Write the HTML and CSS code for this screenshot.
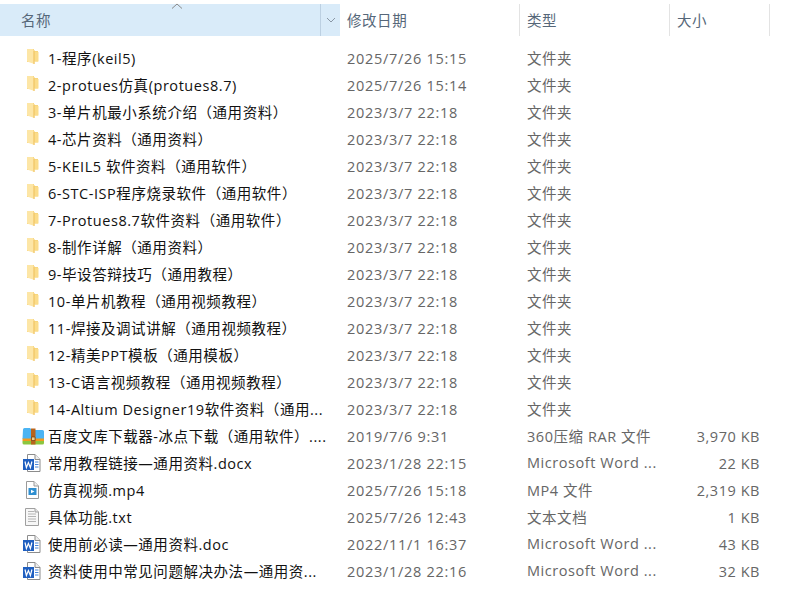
FILE: index.html
```html
<!DOCTYPE html>
<html lang="zh-CN">
<head>
<meta charset="utf-8">
<title>文件列表</title>
<link rel="stylesheet" href="styles.css">
</head>
<body>
<svg class="defs" width="0" height="0" aria-hidden="true">
  <symbol id="folder" viewBox="0 0 16 18">
    <path d="M3 1h7v13H3z" fill="#f3cb62"/>
    <path d="M9 3h5v10.500H9z" fill="#f7d67c"/>
    <path d="M3 1h6l1.500 1.500V16L3 13.500z" fill="#fde6a6"/>
    <path d="M10 2.500V16" stroke="#eebd55"/>
    <path d="M11 4h3.500v9.500H11z" fill="#fbdc8a"/>
  </symbol>
  <symbol id="rar" viewBox="0 0 22 18">
    <path d="M1 2.500Q1 1 2.500 1H8l2 2h10.500Q22 3 22 4.500V12H0.500z" fill="#4bb4f3"/>
    <path d="M0.500 11.500H22V14H0.500z" fill="#f39a1e"/>
    <path d="M0.500 14H22V16Q22 17.500 20.500 17.500H2Q0.500 17.500 0.500 16z" fill="#8cc63f"/>
    <path d="M9 1.500h4.500v16H9z" fill="#b8641c"/>
    <path d="M9.500 10h3.500v3.500H9.500z" fill="#f3d28a" stroke="#6e3b10" stroke-width="0.700"/>
  </symbol>
  <symbol id="word" viewBox="0 0 18 18">
    <path d="M4.500 0.500H12l5 5v12H4.500z" fill="#fff" stroke="#8c8c8c"/>
    <path d="M12 0.500V5.500H17" fill="#eee" stroke="#8c8c8c"/>
    <path d="M12 8h3.500M12 10.500h3.500M12 13h3.500" stroke="#4a86d8"/>
    <path d="M0 5h11v11H0z" fill="#1f5fc0"/>
    <path d="M2 7.500l1.400 6 2-5 2 5 1.500-6" fill="none" stroke="#fff" stroke-width="1.200"/>
  </symbol>
  <symbol id="video" viewBox="0 0 16 18">
    <path d="M2.500 0.500H10l4.500 4.500v12.500H2.500z" fill="#fff" stroke="#9a9a9a"/>
    <path d="M10 0.500V5h4.500" fill="#eee" stroke="#9a9a9a"/>
    <path d="M4.500 7h8v7h-8z" fill="#2f8fd0"/>
    <path d="M7 8.800l3.500 1.700L7 12.200z" fill="#fff"/>
  </symbol>
  <symbol id="text" viewBox="0 0 16 18">
    <path d="M1.500 0.500H11l3.500 3.500v13.500h-13z" fill="#f7f7f7" stroke="#a0a0a0"/>
    <path d="M11 0.500V4h3.500" fill="#e4e4e4" stroke="#a0a0a0"/>
    <path d="M4 3.500h6M4 6h8M4 8.500h8M4 11h8M4 13.500h8" stroke="#b4b4b4"/>
  </symbol>
</svg>
<main class="list">
  <header class="head">
    <div class="hcol hname"><span class="sort"><svg width="12" height="6" viewBox="0 0 12 6"><path d="M1 5.500L6 1l5 4.500" fill="none" stroke="#8a8a8a"/></svg></span><span class="hlabel">名称</span><span class="drop"><svg width="10" height="6" viewBox="0 0 10 6"><path d="M1 1l4 4 4-4" fill="none" stroke="#8a97a5"/></svg></span></div>
    <div class="hcol hdate"><span>修改日期</span></div>
    <div class="hcol htype"><span>类型</span></div>
    <div class="hcol hsize"><span>大小</span></div>
  </header>
  <div class="rows">
    <div class="row"><span class="name"><svg class="ic"><use href="#folder"/></svg><span class="nm">1-程序(keil5)</span></span><span class="date">2025/7/26 15:15</span><span class="type">文件夹</span><span class="size"></span></div>
    <div class="row"><span class="name"><svg class="ic"><use href="#folder"/></svg><span class="nm">2-protues仿真(protues8.7)</span></span><span class="date">2025/7/26 15:14</span><span class="type">文件夹</span><span class="size"></span></div>
    <div class="row"><span class="name"><svg class="ic"><use href="#folder"/></svg><span class="nm">3-单片机最小系统介绍（通用资料）</span></span><span class="date">2023/3/7 22:18</span><span class="type">文件夹</span><span class="size"></span></div>
    <div class="row"><span class="name"><svg class="ic"><use href="#folder"/></svg><span class="nm">4-芯片资料（通用资料）</span></span><span class="date">2023/3/7 22:18</span><span class="type">文件夹</span><span class="size"></span></div>
    <div class="row"><span class="name"><svg class="ic"><use href="#folder"/></svg><span class="nm">5-KEIL5 软件资料（通用软件）</span></span><span class="date">2023/3/7 22:18</span><span class="type">文件夹</span><span class="size"></span></div>
    <div class="row"><span class="name"><svg class="ic"><use href="#folder"/></svg><span class="nm">6-STC-ISP程序烧录软件（通用软件）</span></span><span class="date">2023/3/7 22:18</span><span class="type">文件夹</span><span class="size"></span></div>
    <div class="row"><span class="name"><svg class="ic"><use href="#folder"/></svg><span class="nm">7-Protues8.7软件资料（通用软件）</span></span><span class="date">2023/3/7 22:18</span><span class="type">文件夹</span><span class="size"></span></div>
    <div class="row"><span class="name"><svg class="ic"><use href="#folder"/></svg><span class="nm">8-制作详解（通用资料）</span></span><span class="date">2023/3/7 22:18</span><span class="type">文件夹</span><span class="size"></span></div>
    <div class="row"><span class="name"><svg class="ic"><use href="#folder"/></svg><span class="nm">9-毕设答辩技巧（通用教程）</span></span><span class="date">2023/3/7 22:18</span><span class="type">文件夹</span><span class="size"></span></div>
    <div class="row"><span class="name"><svg class="ic"><use href="#folder"/></svg><span class="nm">10-单片机教程（通用视频教程）</span></span><span class="date">2023/3/7 22:18</span><span class="type">文件夹</span><span class="size"></span></div>
    <div class="row"><span class="name"><svg class="ic"><use href="#folder"/></svg><span class="nm">11-焊接及调试讲解（通用视频教程）</span></span><span class="date">2023/3/7 22:18</span><span class="type">文件夹</span><span class="size"></span></div>
    <div class="row"><span class="name"><svg class="ic"><use href="#folder"/></svg><span class="nm">12-精美PPT模板（通用模板）</span></span><span class="date">2023/3/7 22:18</span><span class="type">文件夹</span><span class="size"></span></div>
    <div class="row"><span class="name"><svg class="ic"><use href="#folder"/></svg><span class="nm">13-C语言视频教程（通用视频教程）</span></span><span class="date">2023/3/7 22:18</span><span class="type">文件夹</span><span class="size"></span></div>
    <div class="row"><span class="name"><svg class="ic"><use href="#folder"/></svg><span class="nm">14-Altium Designer19软件资料（通用...</span></span><span class="date">2023/3/7 22:18</span><span class="type">文件夹</span><span class="size"></span></div>
    <div class="row"><span class="name"><svg class="ic wide"><use href="#rar"/></svg><span class="nm">百度文库下载器-冰点下载（通用软件）....</span></span><span class="date">2019/7/6 9:31</span><span class="type">360压缩 RAR 文件</span><span class="size">3,970 KB</span></div>
    <div class="row"><span class="name"><svg class="ic doc"><use href="#word"/></svg><span class="nm">常用教程链接—通用资料.docx</span></span><span class="date">2023/1/28 22:15</span><span class="type">Microsoft Word ...</span><span class="size">22 KB</span></div>
    <div class="row"><span class="name"><svg class="ic doc"><use href="#video"/></svg><span class="nm">仿真视频.mp4</span></span><span class="date">2025/7/26 15:18</span><span class="type">MP4 文件</span><span class="size">2,319 KB</span></div>
    <div class="row"><span class="name"><svg class="ic doc"><use href="#text"/></svg><span class="nm">具体功能.txt</span></span><span class="date">2025/7/26 12:43</span><span class="type">文本文档</span><span class="size">1 KB</span></div>
    <div class="row"><span class="name"><svg class="ic doc"><use href="#word"/></svg><span class="nm">使用前必读—通用资料.doc</span></span><span class="date">2022/11/1 16:37</span><span class="type">Microsoft Word ...</span><span class="size">43 KB</span></div>
    <div class="row"><span class="name"><svg class="ic doc"><use href="#word"/></svg><span class="nm">资料使用中常见问题解决办法—通用资...</span></span><span class="date">2023/1/28 22:16</span><span class="type">Microsoft Word ...</span><span class="size">32 KB</span></div>
  </div>
</main>
</body>
</html>
```
FILE: styles.css
```css
* { box-sizing: border-box; }
html, body { margin: 0; background: #fff; }
body {
  width: 796px;
  height: 610px;
  overflow: hidden;
  font-family: "Open Sans", "Noto Sans CJK SC", sans-serif;
  font-size: 14.5px;
  letter-spacing: 0.55px;
  color: #111;
}
.defs { display: block; height: 0; }
.list { padding-top: 4px; }
.head {
  display: grid;
  grid-template-columns: 340px 180px 150px 100px;
  height: 32px;
  color: #566779;
}
.hcol {
  display: flex;
  align-items: center;
  padding-left: 7px;
  padding-bottom: 2px;
  border-right: 1px solid #e3e3e3;
}
.hname {
  position: relative;
  padding-left: 21px;
  padding-right: 0;
  padding-bottom: 0;
  background: #d9ebf9;
  border-right: 0;
}
.hlabel { flex: 1; padding-bottom: 2px; }
.sort { position: absolute; left: 171px; top: -1px; line-height: 0; }
.drop {
  width: 20px;
  height: 100%;
  display: flex;
  align-items: center;
  justify-content: center;
  border-left: 1px solid #bcd0e2;
}
.rows { padding-top: 8px; }
.row {
  display: grid;
  grid-template-columns: 340px 180px 150px 90px;
  height: 27px;
  align-items: center;
}
.name { display: flex; align-items: center; padding-left: 24px; min-width: 0; }
.ic { width: 16px; height: 18px; flex: none; margin-right: 8px; margin-top: -2px; }
.ic.wide { width: 22px; height: 18px; margin-left: -2px; margin-right: 4px; margin-top: 0; }
.ic.doc { width: 18px; height: 18px; margin-left: -1px; margin-right: 7px; margin-top: 0; }
.nm { white-space: nowrap; overflow: hidden; }
.date, .type { padding-left: 7px; color: #666; white-space: nowrap; }
.date { padding-top: 1px; letter-spacing: 0.7px; }
.size { text-align: right; color: #666; padding-top: 1px; }
```
